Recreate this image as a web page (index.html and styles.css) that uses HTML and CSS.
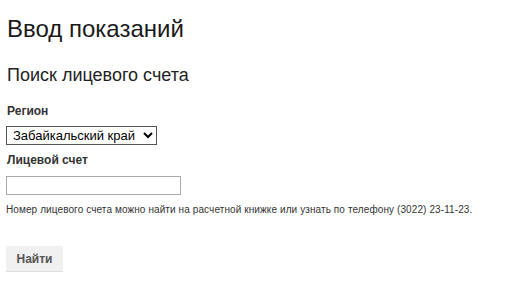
FILE: index.html
```html
<!DOCTYPE html>
<html>
<head>
    <meta charset="utf-8">
    <title>Ввод показаний</title>
    <link rel="stylesheet" href="styles.css">
</head>
<body>
    <div class="page">
        <h1 class="page-title">Ввод показаний</h1>
        <h2 class="section-title">Поиск лицевого счета</h2>
        <form class="search-form">
            <label class="field-label" for="region">Регион</label>
            <select id="region" class="field-select">
                <option>Забайкальский край</option>
            </select>
            <label class="field-label" for="account">Лицевой счет</label>
            <input id="account" class="field-input" type="text">
            <p class="hint">Номер лицевого счета можно найти на расчетной книжке или узнать по телефону (3022) 23-11-23.</p>
            <button type="button" class="submit-btn">Найти</button>
        </form>
    </div>
</body>
</html>
```

FILE: styles.css
```css
body {
    margin: 0;
    background: #fff;
    color: #222;
    font-family: "Liberation Sans", Arial, sans-serif;
}

.page {
    padding: 15px 6px 0;
}

.page-title {
    margin: 0 0 0 1px;
    font-size: 24px;
    font-weight: normal;
    line-height: 28px;
    color: #1a1a1a;
}

.section-title {
    margin: 21px 0 0 1px;
    font-size: 18px;
    font-weight: normal;
    line-height: 22px;
    color: #222;
}

.search-form {
    display: flex;
    flex-direction: column;
    align-items: flex-start;
    margin-top: 17px;
}

.field-label {
    margin-left: 1px;
    font-size: 12px;
    font-weight: bold;
    line-height: 16px;
    color: #333;
}

.field-select {
    margin: 7px 0 7px;
    width: 151px;
    height: 19px;
    padding: 0 2px;
    font-family: "Liberation Sans", Arial, sans-serif;
    font-size: 13px;
    color: #000;
    border: 1px solid #555;
    border-radius: 0;
    background: #fff;
}

.field-input {
    margin-top: 8px;
    width: 175px;
    height: 19px;
    box-sizing: border-box;
    border: 1px solid #aaa;
    padding: 0 4px;
}

.hint {
    margin: 8px 0 0 0;
    font-size: 10px;
    line-height: 14px;
    letter-spacing: 0.1px;
    color: #333;
}

.submit-btn {
    margin-top: 29px;
    width: 57px;
    height: 26px;
    border: none;
    border-bottom: 1px solid #ddd;
    background: #f0f0f0;
    color: #555;
    font-family: "Liberation Sans", Arial, sans-serif;
    font-size: 12px;
    font-weight: bold;
}
```
